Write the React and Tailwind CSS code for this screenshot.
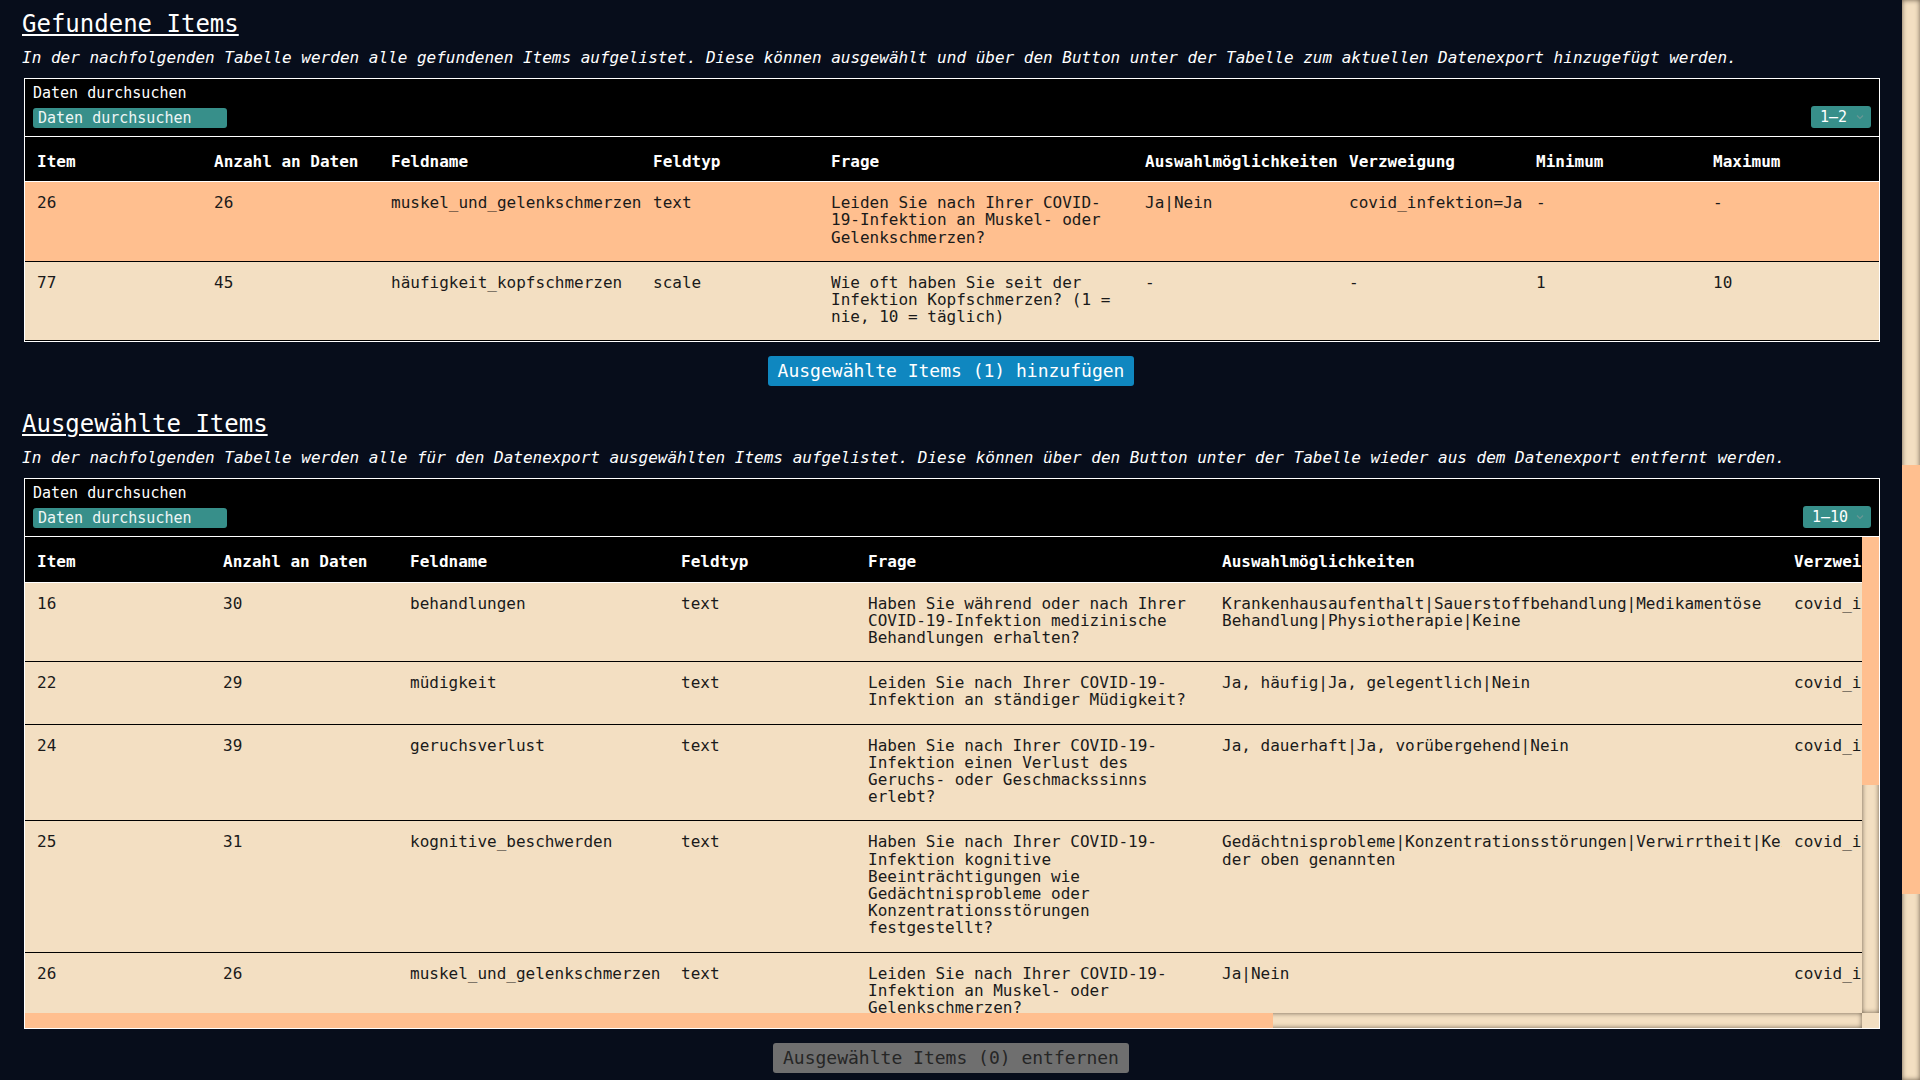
import React from "react";

const foundCols = [
  { label: "Item", w: "w-[177px]" },
  { label: "Anzahl an Daten", w: "w-[177px]" },
  { label: "Feldname", w: "w-[262px]" },
  { label: "Feldtyp", w: "w-[178px]" },
  { label: "Frage", w: "w-[314px]" },
  { label: "Auswahlmöglichkeiten", w: "w-[204px]" },
  { label: "Verzweigung", w: "w-[187px]" },
  { label: "Minimum", w: "w-[177px]" },
  { label: "Maximum", w: "w-[178px]" },
];

const selectedCols = [
  { label: "Item", w: "w-[186px]" },
  { label: "Anzahl an Daten", w: "w-[187px]" },
  { label: "Feldname", w: "w-[271px]" },
  { label: "Feldtyp", w: "w-[187px]" },
  { label: "Frage", w: "w-[354px]" },
  { label: "Auswahlmöglichkeiten", w: "w-[572px]" },
  { label: "Verzweigung", w: "w-[330px]" },
  { label: "Minimum", w: "w-[308px]" },
  { label: "Maximum", w: "w-[309px]" },
];

const foundItems = [
  {
    item: 26,
    count: 26,
    field: "muskel_und_gelenkschmerzen",
    type: "text",
    question: "Leiden Sie nach Ihrer COVID-19-Infektion an Muskel- oder Gelenkschmerzen?",
    options: "Ja|Nein",
    branch: "covid_infektion=Ja",
    min: "-",
    max: "-",
    checked: true,
  },
  {
    item: 77,
    count: 45,
    field: "häufigkeit_kopfschmerzen",
    type: "scale",
    question: "Wie oft haben Sie seit der Infektion Kopfschmerzen? (1 = nie, 10 = täglich)",
    options: "-",
    branch: "-",
    min: "1",
    max: "10",
  },
];

const selectedItems = [
  {
    item: 16,
    count: 30,
    field: "behandlungen",
    type: "text",
    question: "Haben Sie während oder nach Ihrer COVID-19-Infektion medizinische Behandlungen erhalten?",
    options: "Krankenhausaufenthalt|Sauerstoffbehandlung|Medikamentöse Behandlung|Physiotherapie|Keine",
    branch: "covid_infektion=Ja",
    min: "-",
    max: "-",
  },
  {
    item: 22,
    count: 29,
    field: "müdigkeit",
    type: "text",
    question: "Leiden Sie nach Ihrer COVID-19-Infektion an ständiger Müdigkeit?",
    options: "Ja, häufig|Ja, gelegentlich|Nein",
    branch: "covid_infektion=Ja",
    min: "-",
    max: "-",
  },
  {
    item: 24,
    count: 39,
    field: "geruchsverlust",
    type: "text",
    question: "Haben Sie nach Ihrer COVID-19-Infektion einen Verlust des Geruchs- oder Geschmackssinns erlebt?",
    options: "Ja, dauerhaft|Ja, vorübergehend|Nein",
    branch: "covid_infektion=Ja",
    min: "-",
    max: "-",
  },
  {
    item: 25,
    count: 31,
    field: "kognitive_beschwerden",
    type: "text",
    question: "Haben Sie nach Ihrer COVID-19-Infektion kognitive Beeinträchtigungen wie Gedächtnisprobleme oder Konzentrationsstörungen festgestellt?",
    options: "Gedächtnisprobleme|Konzentrationsstörungen|Verwirrtheit|Keine der oben genannten",
    branch: "covid_infektion=Ja",
    min: "-",
    max: "-",
  },
  {
    item: 26,
    count: 26,
    field: "muskel_und_gelenkschmerzen",
    type: "text",
    question: "Leiden Sie nach Ihrer COVID-19-Infektion an Muskel- oder Gelenkschmerzen?",
    options: "Ja|Nein",
    branch: "covid_infektion=Ja",
    min: "-",
    max: "-",
  },
  {
    item: 27,
    count: 34,
    field: "atemnot",
    type: "text",
    question: "Leiden Sie nach Ihrer COVID-19-Infektion unter Atemnot bei körperlicher Belastung?",
    options: "Ja, häufig|Ja, gelegentlich|Nein",
    branch: "covid_infektion=Ja",
    min: "-",
    max: "-",
  },
  {
    item: 28,
    count: 28,
    field: "schlafstörungen",
    type: "text",
    question: "Haben Sie seit Ihrer COVID-19-Infektion Probleme beim Ein- oder Durchschlafen?",
    options: "Ja|Nein",
    branch: "covid_infektion=Ja",
    min: "-",
    max: "-",
  },
  {
    item: 29,
    count: 37,
    field: "konzentration",
    type: "scale",
    question: "Wie stark ist Ihre Konzentration seit der Infektion eingeschränkt? (1 = gar nicht, 10 = sehr)",
    options: "-",
    branch: "covid_infektion=Ja",
    min: "1",
    max: "10",
  },
  {
    item: 31,
    count: 40,
    field: "arbeitsfähigkeit",
    type: "text",
    question: "Waren Sie aufgrund von Long-COVID-Symptomen arbeitsunfähig?",
    options: "Ja, vollständig|Ja, teilweise|Nein",
    branch: "covid_infektion=Ja",
    min: "-",
    max: "-",
  },
  {
    item: 33,
    count: 22,
    field: "impfstatus",
    type: "text",
    question: "Wie oft wurden Sie vor der Infektion gegen COVID-19 geimpft?",
    options: "0|1|2|3|4 oder mehr",
    branch: "-",
    min: "-",
    max: "-",
  },
];

function Chevron() {
  return (
    <svg width="10" height="10" viewBox="0 0 10 10" className="text-[#6a9794]">
      <path d="M2 3.5 L5 6.5 L8 3.5" fill="none" stroke="currentColor" strokeWidth="1.2" />
    </svg>
  );
}

function SearchBar({ range, rangeW }) {
  return (
    <div className="border-b border-white px-2 pt-[4px] pb-[8px]">
      <div className="text-[15px] leading-[20px] text-white">Daten durchsuchen</div>
      <div className="mt-[3px] flex items-end justify-between">
        <input
          placeholder="Daten durchsuchen"
          className="h-[20px] w-[194px] rounded-[3px] bg-[#378f8a] px-[5px] text-[15px] leading-[20px] text-white outline-none placeholder:text-[#eef6f5]"
        />
        <div
          className={
            "flex h-[22px] items-center justify-between rounded-[3px] bg-[#378f8a] pl-[9px] pr-[6px] text-[15px] text-white " +
            rangeW
          }
        >
          <span>{range}</span>
          <Chevron />
        </div>
      </div>
    </div>
  );
}

function DataTable({ cols, rows, width }) {
  return (
    <table className={"table-fixed text-[16px] " + width}>
      <colgroup>
        {cols.map((c) => (
          <col key={c.label} className={c.w} />
        ))}
      </colgroup>
      <thead>
        <tr className="bg-black">
          {cols.map((c) => (
            <th
              key={c.label}
              className="overflow-hidden whitespace-nowrap border-b border-white pt-[16px] pb-[11px] pl-3 pr-2 text-left font-bold leading-[17.2px] text-white"
            >
              {c.label}
            </th>
          ))}
        </tr>
      </thead>
      <tbody>
        {rows.map((r, i) => (
          <tr key={i} className={r.checked ? "bg-[#ffbf8f]" : "bg-[#f3dfc2]"}>
            {[r.item, r.count, r.field, r.type, r.question, r.options, r.branch, r.min, r.max].map((v, j) => (
              <td
                key={j}
                className="overflow-hidden border-b border-black pt-[12px] pb-[15px] pl-3 pr-2 align-top leading-[17.2px] text-[#1a1a1a]"
              >
                {v}
              </td>
            ))}
          </tr>
        ))}
      </tbody>
    </table>
  );
}

function Section({ title, text, children, button, buttonClass, top }) {
  return (
    <section className={top}>
      <h2 className="text-[24px] leading-[30px] text-white underline">{title}</h2>
      <p className="mt-[9px] text-[16px] leading-[20px] italic text-white">{text}</p>
      <div className="mt-[10px] ml-[2px] border border-white bg-black">{children}</div>
      <div className="mt-[14px] flex justify-center">
        <button className={"rounded-[3px] px-[10px] py-1 text-[18px] leading-[22px] " + buttonClass}>{button}</button>
      </div>
    </section>
  );
}

export default function App() {
  return (
    <div className="flex h-screen overflow-hidden bg-[#070d1b] font-['DejaVu_Sans_Mono',monospace]">
      <main className="min-w-0 flex-1 pt-[9px] pr-[22px] pl-[22px]">
        <Section
          title="Gefundene Items"
          text="In der nachfolgenden Tabelle werden alle gefundenen Items aufgelistet. Diese können ausgewählt und über den Button unter der Tabelle zum aktuellen Datenexport hinzugefügt werden."
          button="Ausgewählte Items (1) hinzufügen"
          buttonClass="bg-[#0f87c0] text-white"
        >
          <SearchBar range="1–2" rangeW="w-[60px]" />
          <DataTable cols={foundCols} rows={foundItems} width="w-full" />
        </Section>

        <Section
          top="mt-[23px]"
          title="Ausgewählte Items"
          text="In der nachfolgenden Tabelle werden alle für den Datenexport ausgewählten Items aufgelistet. Diese können über den Button unter der Tabelle wieder aus dem Datenexport entfernt werden."
          button="Ausgewählte Items (0) entfernen"
          buttonClass="bg-[#6f6f6f] text-[#262626]"
        >
          <SearchBar range="1–10" rangeW="w-[68px]" />
          {/* scroll area, bars drawn by hand */}
          <div className="flex h-[491px] flex-col">
            <div className="flex min-h-0 flex-1">
              <div className="min-w-0 flex-1 overflow-hidden">
                <DataTable cols={selectedCols} rows={selectedItems} width="w-[2704px]" />
              </div>
              <div className="w-[17px] shrink-0 bg-[#f3dfc2] shadow-[inset_0_0_5px_#6b5d4b]">
                <div className="h-[248px] bg-[#ffbf8f]" />
              </div>
            </div>
            <div className="flex h-[15px] shrink-0">
              <div className="min-w-0 flex-1 bg-[#f3dfc2] shadow-[inset_0_0_5px_#6b5d4b]">
                <div className="h-full w-[1248px] bg-[#ffbf8f]" />
              </div>
              <div className="w-[17px] shrink-0 bg-[#f3dfc2]" />
            </div>
          </div>
        </Section>
      </main>

      <div className="w-[18px] shrink-0 bg-[#f3dfc2] shadow-[inset_0_0_5px_#6b5d4b]">
        <div className="mt-[465px] h-[429px] bg-[#ffbf8f]" />
      </div>
    </div>
  );
}
